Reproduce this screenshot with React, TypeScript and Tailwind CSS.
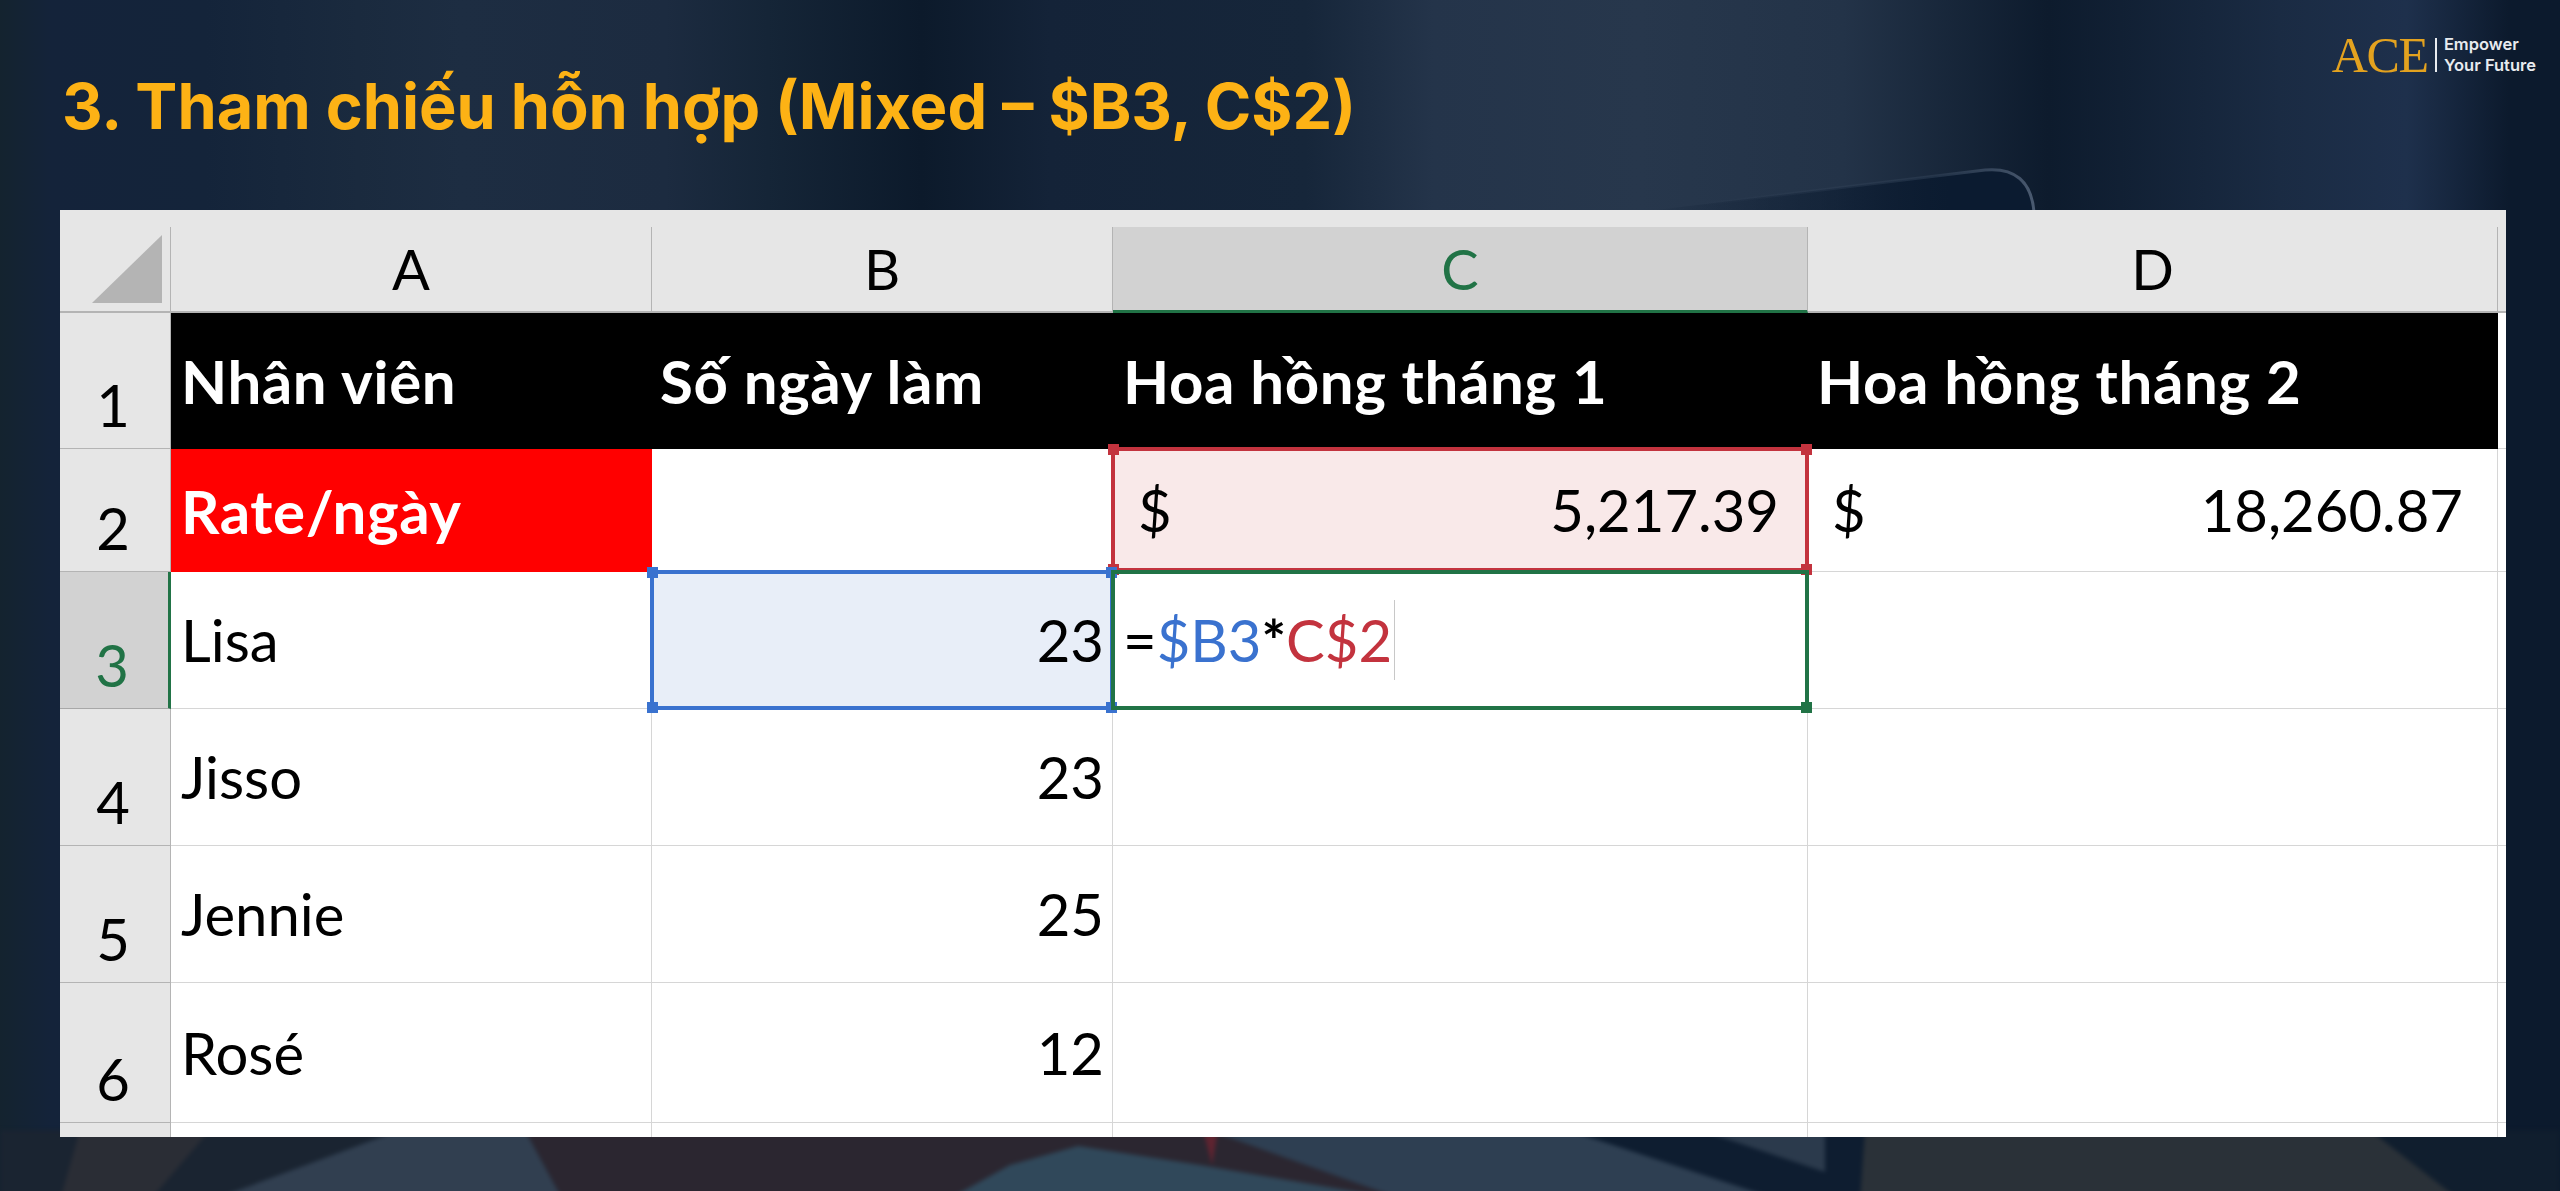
import React from 'react';

// ── Sheet data ───────────────────────────────────────────────────────────────
const columns = [
  { label: 'A', active: false },
  { label: 'B', active: false },
  { label: 'C', active: true },
  { label: 'D', active: false },
];

const people = [
  { row: 4, name: 'Jisso', days: 23, height: 'h-[137px]' },
  { row: 5, name: 'Jennie', days: 25, height: 'h-[137px]' },
  { row: 6, name: 'Rosé', days: 12, height: 'h-[140px]' },
];

const cellText = "font-['Lato',sans-serif] text-[58px] leading-none text-black";
const boldText = "flex items-center font-['Lato',sans-serif] text-[60px] font-bold leading-none tracking-[0.01em] text-white";
const gridCols = 'grid grid-cols-[111px_481px_461px_695px_690px_8px]';

// ── Backdrop: darkened, blurred desk photo ───────────────────────────────────
const Backdrop: React.FC = () => (
  <div className="absolute inset-0 overflow-hidden bg-[linear-gradient(90deg,#14232f_0%,#14233a_2%,#14243a_8%,#1a2a3e_14%,#1d2d42_18%,#1c2b40_26%,#152537_30%,#0c1a2b_36%,#142338_41%,#16263a_51%,#24344a_56%,#27374c_64%,#233348_72%,#0d1b2d_80%,#1a2b43_89%,#1e304c_94%,#0c1a2d_98%)]">
    <svg className="absolute left-0 top-0" width="2560" height="1191" viewBox="0 0 2560 1191" fill="none">
      <defs>
        <linearGradient id="lid" x1="1700" y1="0" x2="2034" y2="0" gradientUnits="userSpaceOnUse">
          <stop offset="0" stopColor="#3c4c62" stopOpacity="0" />
          <stop offset="0.7" stopColor="#33445a" stopOpacity="0.5" />
          <stop offset="1" stopColor="#4a5a70" />
        </linearGradient>
        <linearGradient id="lidFill" x1="1640" y1="0" x2="1950" y2="0" gradientUnits="userSpaceOnUse">
          <stop offset="0" stopColor="#0b1b30" stopOpacity="0" />
          <stop offset="1" stopColor="#0b1b30" />
        </linearGradient>
      </defs>
      <path d="M1640 212 L1985 170 Q2030 166 2034 212 Z" fill="url(#lidFill)" />
      <path d="M1640 212 L1985 170 Q2030 166 2034 212" stroke="url(#lid)" strokeWidth="3" />
      <g className="blur-[2px]">
        <rect x="0" y="1130" width="2560" height="70" fill="#101e30" />
        <path d="M0 1130 H400 L212 1200 H0 Z" fill="#1a2431" />
        <path d="M80 1130 H210 L150 1200 H60 Z" fill="#2a2d35" />
        <path d="M400 1130 H525 L563 1200 H212 Z" fill="#313f50" />
        <path d="M525 1130 H1210 L1404 1200 H563 Z" fill="#2b2630" />
        <path d="M947 1200 L1010 1165 L1078 1146 L1200 1165 L1404 1200 Z" fill="#30485a" />
        <path d="M1208 1130 H1568 L1780 1200 H1404 Z" fill="#2e3f52" />
        <path d="M1568 1130 H1865 V1200 H1780 Z" fill="#0e1d30" />
        <path d="M1700 1130 H1825 V1172 Z" fill="#2b3a4c" />
        <path d="M1865 1130 H2370 L2460 1200 H1860 Z" fill="#2a3138" />
        <path d="M2370 1130 H2560 V1200 H2460 Z" fill="#101e2e" />
        <path d="M1203 1130 L1212 1165 L1218 1130 Z" fill="#5f2430" />
      </g>
    </svg>
  </div>
);

// ── Logo ─────────────────────────────────────────────────────────────────────
const Logo: React.FC = () => (
  <div className="flex items-center gap-[7px] pt-[32px]">
    <span className="font-['Liberation_Serif',serif] text-[50px] leading-[46px] tracking-[-0.025em] text-[#e3a21f]">ACE</span>
    <div className="h-[34px] w-[2px] bg-[#e8ebef]" />
    <div className="flex flex-col font-['Inter',sans-serif] text-[16.5px] font-semibold leading-[21px] text-[#e8ebef]">
      <span>Empower</span>
      <span>Your Future</span>
    </div>
  </div>
);

// ── Selection frame with corner handles ──────────────────────────────────────
const Frame: React.FC<{ border: string; handle: string; className: string; corners?: string[] }> = ({ border, handle, className, corners }) => {
  const all = ['-left-[7px] -top-[7px]', '-right-[7px] -top-[7px]', '-left-[7px] -bottom-[7px]', '-right-[7px] -bottom-[7px]'];
  return (
    <div className={`pointer-events-none absolute z-10 border-[4px] ${border} ${className}`}>
      {(corners || all).map(pos => (
        <span key={pos} className={`absolute h-[11px] w-[11px] ${handle} ${pos}`} />
      ))}
    </div>
  );
};

const RowHead: React.FC<{ n: number; active?: boolean }> = ({ n, active }) => (
  <div className={`flex items-end justify-center border-r border-b pb-[14px] pr-[4px] ${active ? 'border-b-[#a8a8a8] border-r-[#217346] border-r-[3px] bg-[#d2d2d2] !text-[#217346]' : 'border-[#b4b4b4] bg-[#e6e6e6]'} ${cellText}`}>
    {n}
  </div>
);

const Cell: React.FC<{ className?: string; children?: React.ReactNode }> = ({ className = '', children }) => (
  <div className={`relative flex items-center border-r border-b border-[#d6d6d6] ${cellText} ${className}`}>{children}</div>
);

export default function App() {
  return (
    <div className="relative h-[1191px] w-[2560px] overflow-hidden">
      <Backdrop />

      <div className="relative flex h-[210px] items-start justify-between pl-[62px] pr-[24px]">
        <h1 className="pt-[68px] font-['Inter',sans-serif] text-[63px] font-bold leading-[76px] text-[#fdb215]">
          3. Tham chiếu hỗn hợp (Mixed – $B3, C$2)
        </h1>
        <Logo />
      </div>

      <div className="relative ml-[60px] w-[2446px] bg-white">
        {/* Column header */}
        <div className="h-[17px] bg-[#e6e6e6]" />
        <div className={`${gridCols} h-[86px]`}>
          <div className="flex items-end justify-end border-r border-b-2 border-[#b4b4b4] bg-[#e6e6e6] pb-[8px] pr-[8px]">
            <svg width="70" height="68" viewBox="0 0 70 68"><path d="M70 0 V68 H0 Z" fill="#b4b4b4" /></svg>
          </div>
          {columns.map(col => (
            <div
              key={col.label}
              className={`flex items-center justify-center border-r ${col.active ? 'border-b-[3px] border-b-[#217346] border-r-[#b4b4b4] bg-[#d2d2d2] text-[#217346]' : 'border-b-2 border-[#b4b4b4] bg-[#e6e6e6] text-black'} font-['Lato',sans-serif] text-[56px] leading-none`}
            >
              {col.label}
            </div>
          ))}
          <div className="border-b-2 border-[#b4b4b4] bg-[#e6e6e6]" />
        </div>

        {/* Row 1 */}
        <div className={`${gridCols} h-[136px]`}>
          <RowHead n={1} />
          <div className={`${boldText} bg-black pl-[10px]`}>Nhân viên</div>
          <div className={`${boldText} bg-black pl-[8px]`}>Số ngày làm</div>
          <div className={`${boldText} bg-black pl-[10px]`}>Hoa hồng tháng 1</div>
          <div className={`${boldText} bg-black pl-[9px]`}>Hoa hồng tháng 2</div>
          <div className="border-b border-[#d6d6d6]" />
        </div>

        {/* Row 2 */}
        <div className={`${gridCols} h-[123px]`}>
          <RowHead n={2} />
          <div className={`${boldText} bg-[#ff0000] pl-[10px]`}>Rate/ngày</div>
          <Cell />
          <Cell className="justify-between bg-[#f9e9e9] pl-[25px] pr-[28px]">
            <span>$</span>
            <span>5,217.39</span>
            <Frame border="border-[#c3333e]" handle="bg-[#c3333e]" className="-inset-x-[2px] -bottom-[1px] -top-[2px]" />
          </Cell>
          <Cell className="justify-between pl-[24px] pr-[34px]">
            <span>$</span>
            <span>18,260.87</span>
          </Cell>
          <Cell className="border-r-0" />
        </div>

        {/* Row 3 */}
        <div className={`${gridCols} h-[137px]`}>
          <RowHead n={3} active />
          <Cell className="pl-[10px]">Lisa</Cell>
          <Cell className="justify-end bg-[#e8eef8] pr-[8px]">
            23
            <Frame border="border-[#3a72cf]" handle="bg-[#3a72cf]" className="-inset-x-[2px] -inset-y-[2px]" />
          </Cell>
          <Cell className="pl-[10px]">
            <span>=</span>
            <span className="text-[#3a72cf]">$B3</span>
            <span className="font-bold">*</span>
            <span className="text-[#c3333e]">C$2</span>
            <span className="ml-[2px] h-[80px] w-px bg-[#c8c8c8]" />
            <Frame
              border="border-[#217346]"
              handle="bg-[#217346]"
              className="-inset-x-[2px] -inset-y-[2px]"
              corners={['-right-[7px] -bottom-[7px]']}
            />
          </Cell>
          <Cell />
          <Cell className="border-r-0" />
        </div>

        {/* Rows 4-6 */}
        {people.map(p => (
          <div key={p.row} className={`${gridCols} ${p.height}`}>
            <RowHead n={p.row} />
            <Cell className="pl-[10px]">{p.name}</Cell>
            <Cell className="justify-end pr-[8px]">{p.days}</Cell>
            <Cell />
            <Cell />
            <Cell className="border-r-0" />
          </div>
        ))}

        {/* Cut-off row 7 */}
        <div className={`${gridCols} h-[14px]`}>
          <div className="border-r border-[#b4b4b4] bg-[#e6e6e6]" />
          <div className="border-r border-[#d6d6d6]" />
          <div className="border-r border-[#d6d6d6]" />
          <div className="border-r border-[#d6d6d6]" />
          <div className="border-r border-[#d6d6d6]" />
          <div />
        </div>
      </div>
    </div>
  );
}
